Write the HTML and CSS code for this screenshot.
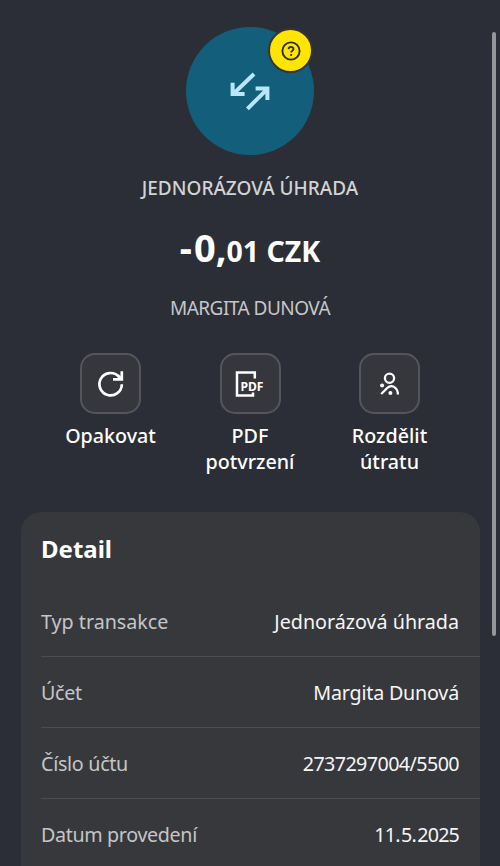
FILE: index.html
```
<!DOCTYPE html>
<html lang="cs">
<head>
<meta charset="utf-8">
<title>Detail transakce</title>
<link rel="stylesheet" href="styles.css">
</head>
<body>
<main class="screen">
  <header class="hero">
    <div class="avatar">
      <svg class="avatar-icon" width="40" height="40" viewBox="0 0 40 40" fill="none" stroke="#b9e6fb" stroke-width="4">
        <path d="M24 3 L4 22.2 M2.6 11.8 V23 H14.6"/>
        <path d="M17.4 37.8 L37 18.4 M25.6 17.6 H37.4 V29"/>
      </svg>
      <span class="badge">
        <svg width="20" height="20" viewBox="0 0 20 20" fill="none" stroke="#2f2d1c">
          <circle cx="10" cy="10" r="8.6" stroke-width="1.9"/>
          <path d="M7.6 8.1 C7.7 5.2 12.5 5.2 12.5 8 C12.5 9.7 10.1 9.7 10.1 11.6" stroke-width="1.8"/>
          <circle cx="10.1" cy="14" r="1.1" fill="#2f2d1c" stroke="none"/>
        </svg>
      </span>
    </div>
    <div class="kind">JEDNORÁZOVÁ ÚHRADA</div>
    <div class="amount"><span class="minus">-</span>0,<span class="amount-minor">01 CZK</span></div>
    <div class="party">MARGITA DUNOVÁ</div>
  </header>

  <nav class="actions">
    <a class="action">
      <span class="tile">
        <svg width="32" height="32" viewBox="0 0 32 32" fill="none" stroke="#fff" stroke-width="2.7">
          <path d="M26.8 16.2 A11.2 11.2 0 1 1 23.8 8.6"/>
          <path d="M26.8 3.2 V11.4 H18"/>
          <path d="M22.6 7.2 L26.6 11.2"/>
        </svg>
      </span>
      <span class="action-label">Opakovat</span>
    </a>
    <a class="action">
      <span class="tile">
        <svg width="32" height="32" viewBox="0 0 32 32" fill="none" stroke="#fff" stroke-width="2.5">
          <path d="M20.8 10.4 V4.6 H3 V27.4 H19 V24.6"/>
          <text class="pdf-text" x="6.5" y="23" textLength="23" lengthAdjust="spacingAndGlyphs">PDF</text>
        </svg>
      </span>
      <span class="action-label">PDF<br>potvrzení</span>
    </a>
    <a class="action">
      <span class="tile">
        <svg width="32" height="32" viewBox="0 0 32 32" fill="none" stroke="#fff" stroke-width="2.3">
          <circle cx="15.5" cy="10.3" r="4.6"/>
          <path d="M7.2 26 L13.2 20 C18 15.6 23.9 20 23.9 26.4"/>
          <circle cx="8.1" cy="17.6" r="2" fill="#fff" stroke="none"/>
          <circle cx="16.4" cy="24.9" r="2" fill="#fff" stroke="none"/>
        </svg>
      </span>
      <span class="action-label">Rozdělit<br>útratu</span>
    </a>
  </nav>

  <section class="card">
    <h2 class="card-title">Detail</h2>
    <dl class="rows">
      <div class="row"><dt>Typ transakce</dt><dd>Jednorázová úhrada</dd></div>
      <div class="row"><dt class="short">Účet</dt><dd class="name">Margita Dunová</dd></div>
      <div class="row"><dt class="short">Číslo účtu</dt><dd class="number">2737297004/5500</dd></div>
      <div class="row last"><dt class="long">Datum provedení</dt><dd class="date">11. 5. 2025</dd></div>
    </dl>
  </section>
</main>
<div class="scrollbar"></div>
</body>
</html>
```
FILE: styles.css
```
* { box-sizing: border-box; }
body {
  margin: 0;
  background: #2b2e36;
  color: #fff;
  font-family: "Noto Sans", sans-serif;
}
.screen {
  display: flex;
  flex-direction: column;
  height: 866px;
  padding: 27px 20px 0 21px;
}
.hero { display: flex; flex-direction: column; align-items: center; padding-right: 1px; }
.avatar {
  position: relative;
  display: grid;
  place-items: center;
  width: 128px;
  height: 128px;
  border-radius: 50%;
  background: #135f7b;
}
.badge {
  position: absolute;
  top: 1px;
  right: 1px;
  display: grid;
  place-items: center;
  width: 45px;
  height: 45px;
  border: 2px solid #35343a;
  border-radius: 50%;
  background: #ffe500;
}
.kind { margin-top: 18px; font-size: 19px; font-weight: 500; line-height: 30px; color: #d2d3d5; }
.amount { margin-top: 19px; font-size: 38px; font-weight: 700; line-height: 50px; }
.minus { letter-spacing: 2px; }
.amount-minor { font-size: 28.5px; line-height: 0; }
.party { margin-top: 21px; font-size: 19px; line-height: 30px; letter-spacing: -0.53px; color: #c6c7ca; }
.actions {
  display: grid;
  grid-template-columns: repeat(3, 139.5px);
  justify-content: center;
  margin-top: 30px;
  padding-right: 1px;
}
.action { display: flex; flex-direction: column; align-items: center; text-align: center; }
.tile {
  display: grid;
  place-items: center;
  width: 61px;
  height: 61px;
  border: 2px solid #55565b;
  border-radius: 15px;
  background: #36373c;
}
.pdf-text { font-size: 13px; font-weight: 700; fill: #fff; stroke: none; }
.action-label { margin-top: 9px; font-size: 19.7px; font-weight: 500; line-height: 26px; }
.card {
  flex: 1;
  min-height: 0;
  margin-top: 37px;
  padding: 20px 0 0 20px;
  border-radius: 20px 20px 0 0;
  background: #37383c;
}
.card-title { margin: 0 0 20px; font-size: 24px; font-weight: 700; line-height: 34px; }
.rows { margin: 0; }
.row {
  display: flex;
  justify-content: space-between;
  align-items: flex-start;
  height: 71px;
  padding: 21px 21px 0 0;
  border-bottom: 1px solid #4d4e52;
  font-size: 19.7px;
  line-height: 30px;
}
.row.last { height: 66px; border-bottom: 0; }
dt { color: #c4c5c8; }
dd { margin: 0; color: #f5f5f6; }
.short { letter-spacing: -0.3px; }
.long { letter-spacing: -0.35px; }
.name { letter-spacing: -0.2px; }
.number { letter-spacing: -0.58px; }
.date { letter-spacing: -0.85px; word-spacing: -2.8px; }
.scrollbar { position: fixed; top: 32px; left: 492px; width: 4px; height: 604px; border-radius: 2px; background: #95969a; }
```
